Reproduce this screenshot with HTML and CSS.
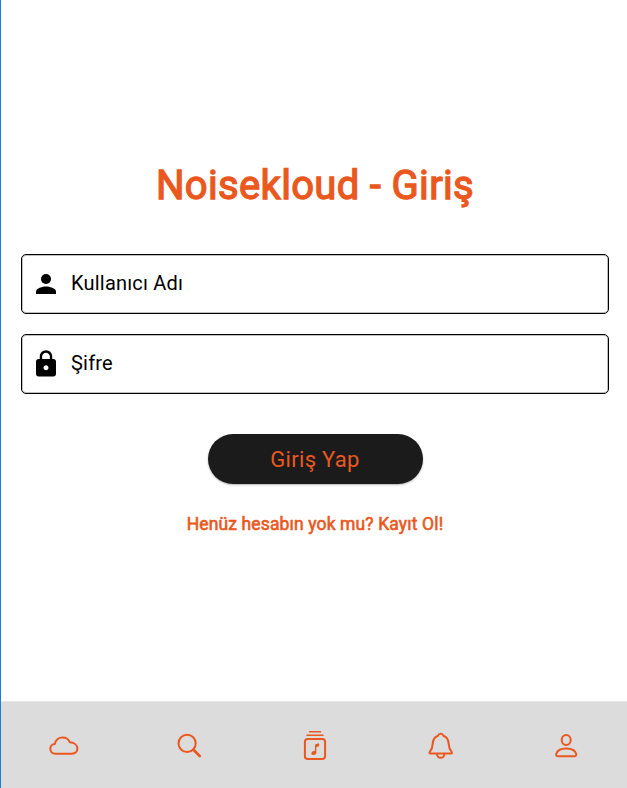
FILE: index.html
```html
<!DOCTYPE html>
<html lang="tr">
<head>
<meta charset="utf-8">
<title>Noisekloud - Giriş</title>
<link rel="stylesheet" href="styles.css">
</head>
<body>
<div class="app">
  <main class="login">
    <h1 class="title">Noisekloud - Giriş</h1>
    <form class="form">
      <div class="field">
        <svg class="field-icon" viewBox="0 0 30 30"><circle cx="15" cy="10" r="5"/><path d="M5 25v-2.500c0-3.300 6.700-5 10-5s10 1.700 10 5V25z"/></svg>
        <span>Kullanıcı Adı</span>
      </div>
      <div class="field">
        <svg class="field-icon" viewBox="0 0 24 24"><path d="M18 8h-1V6c0-2.760-2.240-5-5-5S7 3.240 7 6v2H6c-1.100 0-2 .9-2 2v10c0 1.100.9 2 2 2h12c1.100 0 2-.9 2-2V10c0-1.100-.9-2-2-2zm-6 9c-1.100 0-2-.9-2-2s.9-2 2-2 2 .9 2 2-.9 2-2 2zm3.100-9H8.900V6c0-1.710 1.390-3.100 3.100-3.100s3.100 1.390 3.100 3.100z"/></svg>
        <span>Şifre</span>
      </div>
      <button class="submit" type="button">Giriş Yap</button>
    </form>
    <a class="register">Henüz hesabın yok mu? Kayıt Ol!</a>
  </main>
  <nav class="tabs">
    <a class="tab"><svg viewBox="-1.3 0 50 45"><path d="M15 28.700c-3 0-5-2.100-5-4.900 0-2.700 2-4.700 4.600-4.900.5-3.800 3.800-6.500 7.800-6.500 3.300 0 6 1.900 7 4.900 4.300.2 7.700 2.700 7.700 6.300 0 3.100-2.300 5.100-5.400 5.100z"/></svg></a>
    <a class="tab"><svg viewBox="-1 0 50 45"><circle cx="22.100" cy="18.400" r="8.600"/><path class="thick" d="M28.500 24.700l6.300 6.400"/></svg></a>
    <a class="tab"><svg viewBox="0 0 50 45"><path class="thin" d="M19.500 6.800h11M17 10.200h16"/><rect x="14.900" y="14" width="20.200" height="20.100" rx="2.800"/><path class="solid" d="M25 20.500q0-1.300 1.200-1.600l2-.5q1-.2 1 .8v1.400q0 .8-.8 1l-2.100.7v5.100q0 2.300-2.800 2.500-2.100.1-2.200-1.500 0-1.900 2.400-2.300 1.300-.2 1.300-.9z"/></svg></a>
    <a class="tab"><svg viewBox="0.8 0 50 45"><path d="M25.500 8.800c-1.600 0-2.300.7-2.700 1.900-3.600 1.200-5.100 4.300-5.300 8.200-.2 3.900-1.200 5.800-2.800 7.700-.8 1-.6 2 .6 2h20.400c1.200 0 1.400-1 .6-2-1.600-1.900-2.600-3.800-2.800-7.700-.2-3.900-1.700-7-5.300-8.200-.4-1.200-1.100-1.900-2.700-1.900zM21.800 29c.2 2.400 1.400 3.800 3.700 3.800s3.500-1.400 3.700-3.800"/></svg></a>
    <a class="tab"><svg viewBox="-1 0 50 45"><ellipse cx="24.200" cy="15" rx="4.500" ry="5.100"/><path d="M16.200 31.300c-1.500 0-2.300-.9-2-2.300.9-3.500 5-5.500 10-5.500s9.100 2 10 5.500c.3 1.400-.5 2.300-2 2.300z"/></svg></a>
  </nav>
</div>
</body>
</html>
```
FILE: styles.css
```css
* { box-sizing: border-box; }
html { overflow: hidden; }
body { margin: 0; background: #fff; font-family: Roboto, sans-serif; }
.app {
  width: 629px;
  height: 788px;
  border-left: 1px solid #1a80d9;
  display: flex;
  flex-direction: column;
}
.login {
  flex: 1;
  display: flex;
  flex-direction: column;
  align-items: center;
  padding: 162px 20px 0;
}
.title {
  margin: 0 0 44px;
  font-size: 40px;
  line-height: 48px;
  font-weight: 400;
  color: #ea5820;
  letter-spacing: .33px;
  -webkit-text-stroke: 1.300px #ea5820;
  white-space: nowrap;
}
.form {
  width: 100%;
  display: flex;
  flex-direction: column;
  align-items: center;
  gap: 20px;
}
.field {
  width: 100%;
  height: 60px;
  display: flex;
  align-items: center;
  gap: 10px;
  padding: 0 9px;
  border: 1px solid #000;
  border-radius: 5px;
  box-shadow: inset 0 0 0 1px rgba(0, 0, 0, .25);
  font-size: 20px;
  color: #000;
  letter-spacing: .2px;
}
.field span { padding-bottom: 2px; }
.field-icon { width: 30px; height: 30px; }
.submit {
  width: 215px;
  height: 50px;
  margin-top: 20px;
  padding: 2px 0 0;
  border: 0;
  border-radius: 25px;
  background: #1b1b1b;
  color: #ea5820;
  font: 400 22px/48px Roboto, sans-serif;
  letter-spacing: .3px;
  box-shadow: 0 1px 2px rgba(0, 0, 0, .3);
}
.register {
  margin-top: 28px;
  font-size: 17.500px;
  line-height: 24px;
  color: #ea5820;
  letter-spacing: .13px;
  -webkit-text-stroke: .6px #ea5820;
  white-space: nowrap;
}
.tabs {
  height: 87px;
  display: flex;
  align-items: center;
  padding-top: 5px;
  background: #dcdcdc;
  border-top: 1px solid #e7e7e7;
}
.tab { flex: 1; display: flex; justify-content: center; }
.tab svg {
  width: 50px;
  height: 45px;
  fill: none;
  stroke: #ea5820;
  stroke-width: 2;
  stroke-linecap: round;
  stroke-linejoin: round;
}
.tab .thick { stroke-width: 2.700; }
.tab .thin { stroke-width: 1.500; }
.tab .solid { fill: #ea5820; stroke: none; }
```
